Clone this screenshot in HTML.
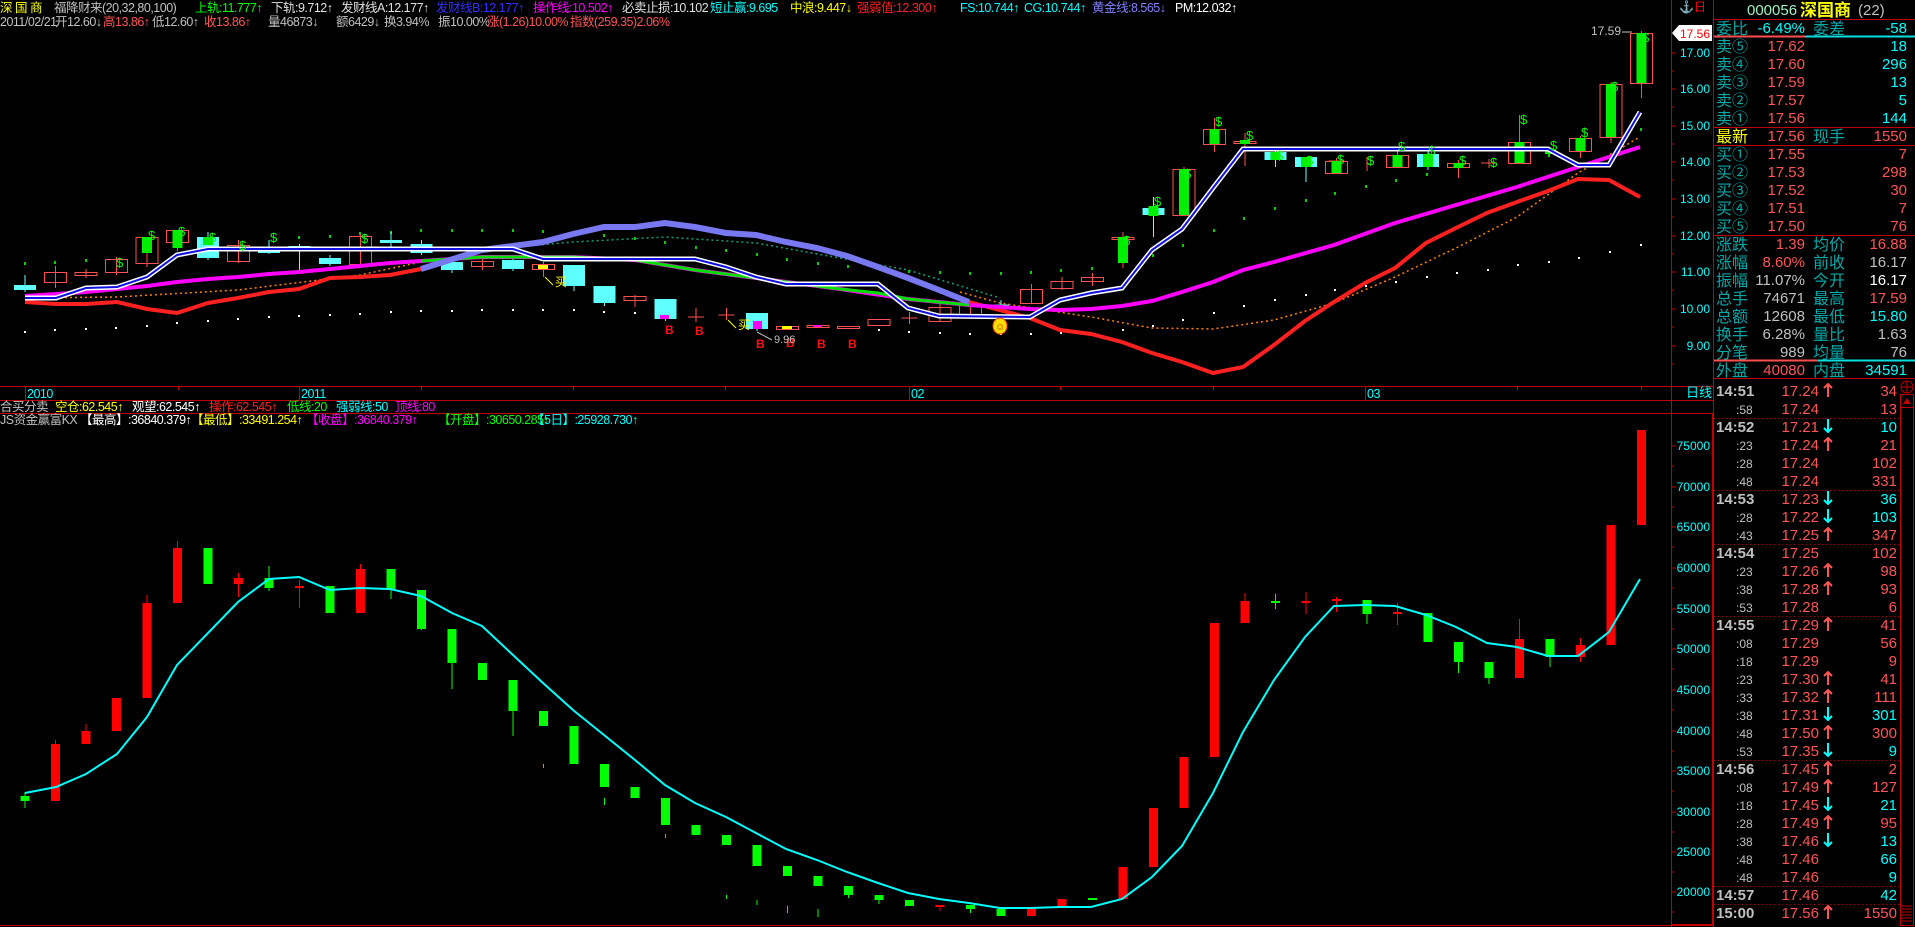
<!DOCTYPE html>
<html><head><meta charset="utf-8"><style>
html,body{margin:0;padding:0;background:#000;width:1915px;height:927px;overflow:hidden}
svg{display:block}
text{font-family:"Liberation Sans","Noto Sans CJK SC",sans-serif}
.s{font-size:12.5px;letter-spacing:-0.5px}
.r{font-size:15px}
.lb{font-size:16px;fill:#00a8a8}
</style></head><body>
<svg width="1915" height="927" viewBox="0 0 1915 927" xmlns="http://www.w3.org/2000/svg">
<g stroke="#c00000" stroke-width="1" fill="none">
<line x1="0" y1="386.5" x2="1713" y2="386.5"/>
<line x1="0" y1="400.5" x2="1713" y2="400.5"/>
<line x1="0" y1="413.5" x2="1671" y2="413.5"/>
<line x1="0" y1="925.5" x2="1713" y2="925.5"/>
<line x1="1671.5" y1="0" x2="1671.5" y2="927"/>
<line x1="1713.5" y1="0" x2="1713.5" y2="927"/>
<rect x="1671.5" y="413.5" width="41" height="511"/>
<line x1="25.5" y1="386" x2="25.5" y2="400"/>
<line x1="299.5" y1="386" x2="299.5" y2="400"/>
<line x1="909.5" y1="386" x2="909.5" y2="400"/>
<line x1="1365.5" y1="386" x2="1365.5" y2="400"/>
<line x1="178.5" y1="386" x2="178.5" y2="390"/><line x1="421.5" y1="386" x2="421.5" y2="390"/><line x1="573.5" y1="386" x2="573.5" y2="390"/><line x1="725.5" y1="386" x2="725.5" y2="390"/><line x1="1060.5" y1="386" x2="1060.5" y2="390"/><line x1="1213.5" y1="386" x2="1213.5" y2="390"/><line x1="1517.5" y1="386" x2="1517.5" y2="390"/><line x1="1641.5" y1="386" x2="1641.5" y2="390"/>
</g>
<g class="s">
<text x="0" y="12" fill="#ffff00">深 国 商</text>
<text x="54" y="12" fill="#c0c0c0">福降财来(20,32,80,100)</text>
<text x="195" y="12" fill="#00ff00">上轨:11.777↑</text>
<text x="271" y="12" fill="#e0e0e0">下轨:9.712↑</text>
<text x="341" y="12" fill="#e0e0e0">发财线A:12.177↑</text>
<text x="436" y="12" fill="#3030ff">发财线B:12.177↑</text>
<text x="533" y="12" fill="#ff00ff">操作线:10.502↑</text>
<text x="622" y="12" fill="#e0e0e0">必卖止损:10.102</text>
<text x="710" y="12" fill="#00ffff">短止赢:9.695</text>
<text x="790" y="12" fill="#ffff00">中浪:9.447↓</text>
<text x="857" y="12" fill="#ff2020">强弱值:12.300↑</text>
<text x="960" y="12" fill="#00ffff">FS:10.744↑</text>
<text x="1024" y="12" fill="#00ffff">CG:10.744↑</text>
<text x="1092" y="12" fill="#8080ff">黄金线:8.565↓</text>
<text x="1175" y="12" fill="#ffffff">PM:12.032↑</text>
<text x="0" y="26" fill="#c0c0c0">2011/02/21</text>
<text x="55" y="26" fill="#c0c0c0">开12.60↓</text>
<text x="103" y="26" fill="#ff5555">高13.86↑</text>
<text x="152" y="26" fill="#c0c0c0">低12.60↑</text>
<text x="204" y="26" fill="#ff5555">收13.86↑</text>
<text x="268" y="26" fill="#c0c0c0">量46873↓</text>
<text x="336" y="26" fill="#c0c0c0">额6429↓</text>
<text x="384" y="26" fill="#c0c0c0">换3.94%</text>
<text x="438" y="26" fill="#c0c0c0">振10.00%</text>
<text x="487" y="26" fill="#ff5555">涨(1.26)10.00%</text>
<text x="570" y="26" fill="#ff5555">指数(259.35)2.06%</text>
<text x="27" y="398" fill="#00ffff">2010</text>
<text x="301" y="398" fill="#00ffff">2011</text>
<text x="911" y="398" fill="#00ffff">02</text>
<text x="1367" y="398" fill="#00ffff">03</text>
<text x="0" y="411" fill="#c0c0c0">合买分卖</text>
<text x="55" y="411" fill="#ffff00">空仓:62.545↑</text>
<text x="132" y="411" fill="#ffffff">观望:62.545↑</text>
<text x="209" y="411" fill="#ff2020">操作:62.545↑</text>
<text x="287" y="411" fill="#00ff00">低线:20</text>
<text x="336" y="411" fill="#00ffff">强弱线:50</text>
<text x="395" y="411" fill="#ff00ff">顶线:80</text>
<text x="0" y="424" fill="#c0c0c0">JS资金赢富KX</text>
<text x="80" y="424" fill="#ffffff">【最高】:36840.379↑</text>
<text x="191" y="424" fill="#ffff00">【最低】:33491.254↑</text>
<text x="306" y="424" fill="#ff00ff">【收盘】:36840.379↑</text>
<text x="438" y="424" fill="#00ff00">【开盘】:30650.285↑</text>
<text x="532" y="424" fill="#00ffff">【5日】:25928.730↑</text>
</g>
<g font-size="12" fill="#00ffff" text-anchor="end">
<text x="1710" y="57">17.00</text><text x="1710" y="93">16.00</text><text x="1710" y="130">15.00</text><text x="1710" y="166">14.00</text><text x="1710" y="203">13.00</text><text x="1710" y="240">12.00</text><text x="1710" y="276">11.00</text><text x="1710" y="313">10.00</text><text x="1710" y="350">9.00</text>
<text x="1710" y="450">75000</text><text x="1710" y="491">70000</text><text x="1710" y="531">65000</text><text x="1710" y="572">60000</text><text x="1710" y="613">55000</text><text x="1710" y="653">50000</text><text x="1710" y="694">45000</text><text x="1710" y="735">40000</text><text x="1710" y="775">35000</text><text x="1710" y="816">30000</text><text x="1710" y="856">25000</text><text x="1710" y="896">20000</text>
</g>
<g stroke="#c00000">
<path d="M1671 53h5M1671 89h5M1671 126h5M1671 162h5M1671 199h5M1671 236h5M1671 272h5M1671 309h5M1671 346h5M1671 71h3M1671 107h3M1671 144h3M1671 180h3M1671 217h3M1671 254h3M1671 290h3M1671 327h3M1671 364h3"/>
<path d="M1671 446h5M1671 487h5M1671 527h5M1671 568h5M1671 609h5M1671 649h5M1671 690h5M1671 731h5M1671 771h5M1671 812h5M1671 852h5M1671 892h5M1671 466h3M1671 507h3M1671 547h3M1671 588h3M1671 629h3M1671 669h3M1671 710h3M1671 751h3M1671 791h3M1671 832h3M1671 872h3M1671 912h3"/>
</g>
<path d="M1672 33 L1679 25 H1712 V41 H1679 Z" fill="#ffffff"/>
<text x="1710" y="38" font-size="12" fill="#ff0000" text-anchor="end">17.56</text>
<text x="1679" y="11" font-size="12" fill="#ff0000">⚓日</text>
<text x="1686" y="397" font-size="13" fill="#00ffff">日线</text>
<text x="1591" y="35" font-size="12" fill="#c0c0c0">17.59</text>
<line x1="1622" y1="32" x2="1632" y2="32" stroke="#c0c0c0"/>

<g fill="#ffffff">
<rect x="24" y="331" width="2" height="2"/><rect x="54" y="329" width="2" height="2"/><rect x="85" y="328" width="2" height="2"/><rect x="115" y="327" width="2" height="2"/><rect x="146" y="325" width="2" height="2"/><rect x="176" y="322" width="2" height="2"/><rect x="207" y="320" width="2" height="2"/><rect x="237" y="318" width="2" height="2"/><rect x="268" y="316" width="2" height="2"/><rect x="298" y="315" width="2" height="2"/><rect x="329" y="314" width="2" height="2"/><rect x="359" y="313" width="2" height="2"/><rect x="390" y="311" width="2" height="2"/><rect x="420" y="310" width="2" height="2"/><rect x="451" y="310" width="2" height="2"/><rect x="481" y="309" width="2" height="2"/><rect x="512" y="309" width="2" height="2"/><rect x="542" y="309" width="2" height="2"/><rect x="573" y="309" width="2" height="2"/><rect x="603" y="311" width="2" height="2"/><rect x="634" y="312" width="2" height="2"/>
<rect x="878" y="329" width="2" height="2"/><rect x="908" y="331" width="2" height="2"/><rect x="939" y="332" width="2" height="2"/><rect x="969" y="333" width="2" height="2"/><rect x="1000" y="333" width="2" height="2"/><rect x="1030" y="333" width="2" height="2"/><rect x="1060" y="332" width="2" height="2"/><rect x="1122" y="329" width="2" height="2"/><rect x="1152" y="325" width="2" height="2"/><rect x="1182" y="319" width="2" height="2"/><rect x="1213" y="312" width="2" height="2"/><rect x="1243" y="305" width="2" height="2"/><rect x="1274" y="299" width="2" height="2"/><rect x="1305" y="294" width="2" height="2"/><rect x="1334" y="289" width="2" height="2"/><rect x="1365" y="285" width="2" height="2"/><rect x="1395" y="281" width="2" height="2"/><rect x="1426" y="276" width="2" height="2"/><rect x="1456" y="272" width="2" height="2"/><rect x="1487" y="269" width="2" height="2"/><rect x="1517" y="264" width="2" height="2"/><rect x="1548" y="261" width="2" height="2"/><rect x="1578" y="257" width="2" height="2"/><rect x="1609" y="251" width="2" height="2"/><rect x="1640" y="244" width="2" height="2"/>
</g>
<g fill="#00d000">
<rect x="24" y="262" width="2" height="3"/><rect x="54" y="261" width="2" height="3"/><rect x="85" y="259" width="2" height="3"/><rect x="298" y="236" width="2" height="3"/><rect x="329" y="235" width="2" height="3"/><rect x="359" y="232" width="2" height="3"/><rect x="390" y="231" width="2" height="3"/><rect x="420" y="229" width="2" height="3"/><rect x="451" y="229" width="2" height="3"/><rect x="481" y="229" width="2" height="3"/><rect x="512" y="229" width="2" height="3"/><rect x="542" y="230" width="2" height="3"/><rect x="573" y="231" width="2" height="3"/><rect x="603" y="234" width="2" height="3"/><rect x="634" y="237" width="2" height="3"/><rect x="664" y="241" width="2" height="3"/><rect x="695" y="246" width="2" height="3"/><rect x="725" y="249" width="2" height="3"/><rect x="756" y="253" width="2" height="3"/><rect x="786" y="258" width="2" height="3"/><rect x="817" y="262" width="2" height="3"/><rect x="847" y="265" width="2" height="3"/><rect x="908" y="270" width="2" height="3"/><rect x="939" y="271" width="2" height="3"/><rect x="969" y="272" width="2" height="3"/><rect x="1000" y="272" width="2" height="3"/><rect x="1030" y="271" width="2" height="3"/><rect x="1060" y="269" width="2" height="3"/><rect x="1091" y="267" width="2" height="3"/><rect x="1152" y="254" width="2" height="3"/><rect x="1182" y="244" width="2" height="3"/><rect x="1213" y="229" width="2" height="3"/><rect x="1243" y="217" width="2" height="3"/><rect x="1274" y="207" width="2" height="3"/><rect x="1305" y="199" width="2" height="3"/><rect x="1334" y="192" width="2" height="3"/><rect x="1365" y="185" width="2" height="3"/><rect x="1395" y="179" width="2" height="3"/><rect x="1426" y="173" width="2" height="3"/><rect x="1548" y="154" width="2" height="3"/><rect x="1640" y="128" width="2" height="3"/>
</g>
<polyline fill="none" stroke="#ff8000" stroke-width="1.5" stroke-dasharray="2,3" points="25,298 117,297 238,290 360,275 421,262"/>
<polyline fill="none" stroke="#ff8000" stroke-width="1.5" stroke-dasharray="2,3" points="960,292 1000,303 1091,317 1152,328 1213,329 1274,320 1334,303 1395,277 1456,248 1517,217 1578,173 1640,137"/>
<polyline fill="none" stroke="#10a080" stroke-width="1.5" stroke-dasharray="2,3" points="482,250 573,242 665,237 756,243 840,258 908,270 1000,298"/>
<g stroke="#ff5050" fill="none" stroke-width="1">
<path d="M55.5 266V288M86 269V278M116.5 257V275M147 237V267M177.5 230V251M238.5 240V263M360.5 234V265M482.5 258V270M543.5 262V277M635 295V307M696 308V322M726.5 308V320M909.5 312V324M940 300V322M970.5 302V316M1031.5 284V304M1062 277V290M1092.5 273V286M1123 232V268M1184 167V216M1214.5 118V152M1245 133V166M1336.5 158V174M1367 157V171M1397.5 150V168M1458.5 160V178M1489 159V168M1519.5 115V164M1580.5 136V158M1611 82V143M1641.5 31V98"/>
<rect x="44.5" y="272.5" width="22" height="10"/><rect x="75" y="272.5" width="22" height="3"/><rect x="105.5" y="259.5" width="22" height="13"/><rect x="136" y="237.5" width="22" height="26"/><rect x="166.5" y="230.5" width="22" height="12"/><rect x="227.5" y="245.5" width="22" height="16"/><rect x="349.5" y="236.5" width="22" height="28"/><rect x="471.5" y="261.5" width="22" height="5"/><rect x="532.5" y="264.5" width="22" height="5"/><rect x="624" y="296.5" width="22" height="4"/><rect x="776.5" y="326.5" width="22" height="3"/><rect x="807" y="325.5" width="22" height="2"/><rect x="837.5" y="326.5" width="22" height="2"/><rect x="868" y="319.5" width="22" height="6"/><rect x="929" y="307.5" width="22" height="14"/><rect x="959.5" y="305.5" width="22" height="10"/><rect x="1020.5" y="289.5" width="22" height="14"/><rect x="1051" y="281.5" width="22" height="7"/><rect x="1081.5" y="277.5" width="22" height="4"/><rect x="1112" y="237.5" width="22" height="2"/><rect x="1173" y="169.5" width="22" height="46"/><rect x="1203.5" y="129.5" width="22" height="15"/><rect x="1234" y="141.5" width="22" height="2"/><rect x="1325.5" y="161.5" width="22" height="12"/><rect x="1386.5" y="155.5" width="22" height="12"/><rect x="1447.5" y="163.5" width="22" height="4"/><rect x="1508.5" y="142.5" width="22" height="21"/><rect x="1569.5" y="138.5" width="22" height="13"/><rect x="1600" y="84.5" width="22" height="53"/><rect x="1630.5" y="33.5" width="22" height="50"/>
<path d="M688 317H704M718.5 315H734.5M901.5 318H917.5M1328.5 161H1344.5M1481 163H1497"/>
</g>
<g stroke="#60ffff" fill="#60ffff">
<path d="M25 275V292M208 232V260M269 240V254M299.5 244V271M330 255V266M391 232V247M421.5 240V255M452 258V273M513 256V271M574 265V291M604.5 286V306M665.5 299V321M757 313V331M1001 300V310M1153.5 197V237M1275.5 150V167M1306 157V182M1428 150V170" fill="none"/>
<rect x="14" y="285" width="22" height="5" stroke="none"/><rect x="197" y="237" width="22" height="21" stroke="none"/><rect x="258" y="250" width="22" height="3" stroke="none"/><rect x="288.5" y="246" width="22" height="2" stroke="none"/><rect x="319" y="258" width="22" height="6" stroke="none"/><rect x="380" y="240" width="22" height="3" stroke="none"/><rect x="410.5" y="244" width="22" height="9" stroke="none"/><rect x="441" y="262" width="22" height="8" stroke="none"/><rect x="502" y="260" width="22" height="9" stroke="none"/><rect x="563" y="265" width="22" height="21" stroke="none"/><rect x="593.5" y="286" width="22" height="17" stroke="none"/><rect x="654.5" y="299" width="22" height="20" stroke="none"/><rect x="746" y="313" width="22" height="16" stroke="none"/><rect x="1142.5" y="208" width="22" height="7" stroke="none"/><rect x="1264.5" y="152" width="22" height="8" stroke="none"/><rect x="1295" y="157" width="22" height="10" stroke="none"/><rect x="1417" y="154" width="22" height="13" stroke="none"/>
<path d="M993 305H1009" fill="none"/>
</g>
<g fill="#00ee00">
<rect x="142" y="237" width="10" height="16"/><rect x="172.5" y="230" width="10" height="18"/><rect x="203" y="237" width="10" height="8"/><rect x="1118" y="237" width="10" height="26"/><rect x="1148.5" y="206" width="10" height="10"/><rect x="1179" y="169" width="10" height="46"/><rect x="1209.5" y="129" width="10" height="15"/><rect x="1240" y="140" width="10" height="4"/><rect x="1270.5" y="152" width="10" height="8"/><rect x="1301" y="157" width="10" height="10"/><rect x="1331.5" y="161" width="10" height="12"/><rect x="1392.5" y="155" width="10" height="12"/><rect x="1423" y="154" width="10" height="13"/><rect x="1453.5" y="163" width="10" height="5"/><rect x="1514.5" y="142" width="10" height="21"/><rect x="1545" y="150" width="10" height="4"/><rect x="1575.5" y="138" width="10" height="13"/><rect x="1606" y="84" width="10" height="53"/><rect x="1636.5" y="33" width="10" height="50"/>
</g>
<rect x="538" y="265" width="10" height="4" fill="#ffff00"/><rect x="782" y="326" width="10" height="3" fill="#ffff00"/><rect x="753" y="321" width="9" height="8" fill="#ff00ff"/><rect x="660" y="315" width="9" height="4" fill="#ff00ff"/><rect x="813" y="325" width="9" height="2" fill="#ff00ff"/>
<polyline fill="none" stroke="#ff2020" stroke-width="4" points="25,302 56,304 86,304 117,302 147,309 177,313 208,303 238,298 269,292 299,289 330,278 360,277 390,275 421,269 482,250 543,242 573,234 604,227 635,227 665,223 695,227 726,233 756,235 786,242 817,248 847,256 878,267 908,278 939,290 969,302 1030,318 1060,330 1091,334 1122,342 1152,353 1182,362 1213,373 1243,367 1274,345 1305,321 1334,302 1365,283 1395,268 1426,243 1456,228 1487,213 1517,202 1548,191 1578,179 1609,180 1640,197"/>
<polyline fill="none" stroke="#ff00ff" stroke-width="4" points="25,296 56,294 86,292 117,289 147,286 177,282 208,279 238,277 269,274 299,272 330,269 360,266 390,263 421,261 482,257 573,257 635,260 695,270 756,278 840,289 908,299 969,305 1000,307 1030,309 1060,310 1091,309 1122,306 1152,301 1182,292 1213,282 1243,270 1274,262 1334,245 1395,223 1456,205 1517,187 1578,167 1640,147"/>
<polyline fill="none" stroke="#00e000" stroke-width="3" points="421,261 482,257 573,257 635,260 695,270 756,278 840,289 878,293 908,299 969,305"/>
<polyline fill="none" stroke="#7878f0" stroke-width="6" points="421,269 482,250 543,242 573,234 604,227 635,227 665,223 695,227 726,233 756,235 786,242 817,248 847,256 878,267 908,278 939,290 969,302"/>
<polyline fill="none" stroke="#ffffff" stroke-width="5" points="25,298 56,298 86,288 117,287 147,277 177,255 208,249 482,249 513,249 543,259 695,259 726,267 756,277 786,284 878,284 908,308 939,316 1030,317 1060,300 1091,293 1122,288 1152,250 1182,229 1213,188 1243,149 1548,149 1578,165 1609,165 1640,112"/>
<polyline fill="none" stroke="#1010e0" stroke-width="2" points="25,298 56,298 86,288 117,287 147,277 177,255 208,249 482,249 513,249 543,259 695,259 726,267 756,277 786,284 878,284 908,308 939,316 1030,317 1060,300 1091,293 1122,288 1152,250 1182,229 1213,188 1243,149 1548,149 1578,165 1609,165 1640,112"/>
<g fill="#00ff00" font-size="13" font-family="Liberation Sans,sans-serif">
<text x="116" y="267">$</text><text x="148" y="240">$</text><text x="178" y="236">$</text><text x="209" y="242">$</text><text x="239" y="250">$</text><text x="270" y="242">$</text><text x="361" y="243">$</text>
<text x="1123" y="245">$</text><text x="1154" y="206">$</text><text x="1184" y="178">$</text><text x="1215" y="126">$</text><text x="1246" y="140">$</text><text x="1276" y="160">$</text><text x="1306" y="165">$</text><text x="1337" y="164">$</text><text x="1367" y="165">$</text><text x="1398" y="151">$</text><text x="1428" y="155">$</text><text x="1459" y="165">$</text><text x="1490" y="167">$</text><text x="1520" y="124">$</text><text x="1550" y="150">$</text><text x="1581" y="137">$</text><text x="1611" y="91">$</text><text x="1642" y="42">$</text>
</g>
<g fill="#ff1010" font-size="12" font-weight="bold">
<text x="665" y="334">B</text><text x="695" y="335">B</text><text x="756" y="348">B</text><text x="786" y="347">B</text><text x="817" y="348">B</text><text x="848" y="348">B</text>
</g>
<g fill="#ffff00" font-size="12"><text x="555" y="286">买</text><text x="738" y="329">买</text></g>
<path d="M545 277l8 8M728 320l8 8" stroke="#ffff00"/>
<text x="774" y="343" font-size="11" fill="#c0c0c0">9.96</text>
<path d="M757 332l15 8" stroke="#c0c0c0"/>
<ellipse cx="1000" cy="326" rx="7" ry="8" fill="#ffdd00" stroke="#ff4000"/>
<text x="995" y="330" font-size="10" fill="#a04000">☺</text>

<g stroke="#ff0000" fill="#ff0000">
<path d="M55.5 740V801M86 724V744M147 595V603M177.5 541V548M238.5 573V597M299.5 580V608M360.5 564V613M940 906V911M1245 593V623M1306 592V614M1336.5 597V612M1397.5 603V625M1519.5 619V678M1580.5 638V662" fill="none"/>
<rect x="51" y="744" width="9" height="57" stroke="none"/><rect x="81.5" y="731" width="9" height="13" stroke="none"/><rect x="112" y="698" width="9" height="33" stroke="none"/><rect x="142.5" y="603" width="9" height="95" stroke="none"/><rect x="173" y="548" width="9" height="55" stroke="none"/><rect x="234" y="578" width="9" height="6" stroke="none"/><rect x="295" y="586" width="9" height="2" stroke="none"/><rect x="356" y="569" width="9" height="44" stroke="none"/><rect x="935.5" y="905" width="9" height="2" stroke="none"/><rect x="1027" y="907" width="9" height="9" stroke="none"/><rect x="1057.5" y="899" width="9" height="8" stroke="none"/><rect x="1118.5" y="867" width="9" height="32" stroke="none"/><rect x="1149" y="808" width="9" height="59" stroke="none"/><rect x="1179.5" y="757" width="9" height="51" stroke="none"/><rect x="1210" y="623" width="9" height="134" stroke="none"/><rect x="1240.5" y="601" width="9" height="22" stroke="none"/><rect x="1301.5" y="601" width="9" height="2" stroke="none"/><rect x="1332" y="599" width="9" height="2" stroke="none"/><rect x="1393" y="612" width="9" height="2" stroke="none"/><rect x="1515" y="639" width="9" height="39" stroke="none"/><rect x="1576" y="645" width="9" height="12" stroke="none"/><rect x="1606.5" y="525" width="9" height="120" stroke="none"/><rect x="1637" y="430" width="9" height="95" stroke="none"/>
</g>
<g stroke="#00ff00" fill="#00ff00">
<path d="M25 792V808M269 566V591M391 570V599M421.5 629V630M452 663V689M513 711V736M543.5 764V768M604.5 798V805M665.5 834V838M726.5 895V899M757 900V905M787.5 906V913M818 909V917M848.5 886V898M879 895V904M970.5 905V913M1275.5 594V609M1367 613V624M1458.5 662V673M1489 678V684M1550 657V667" fill="none"/>
<rect x="20.5" y="796" width="9" height="5" stroke="none"/><rect x="203.5" y="548" width="9" height="36" stroke="none"/><rect x="264.5" y="578" width="9" height="10" stroke="none"/><rect x="325.5" y="586" width="9" height="27" stroke="none"/><rect x="386.5" y="569" width="9" height="21" stroke="none"/><rect x="417" y="590" width="9" height="39" stroke="none"/><rect x="447.5" y="629" width="9" height="34" stroke="none"/><rect x="478" y="663" width="9" height="17" stroke="none"/><rect x="508.5" y="680" width="9" height="31" stroke="none"/><rect x="539" y="711" width="9" height="15" stroke="none"/><rect x="569.5" y="726" width="9" height="38" stroke="none"/><rect x="600" y="764" width="9" height="23" stroke="none"/><rect x="630.5" y="787" width="9" height="11" stroke="none"/><rect x="661" y="798" width="9" height="27" stroke="none"/><rect x="691.5" y="825" width="9" height="10" stroke="none"/><rect x="722" y="835" width="9" height="10" stroke="none"/><rect x="752.5" y="845" width="9" height="21" stroke="none"/><rect x="783" y="866" width="9" height="10" stroke="none"/><rect x="813.5" y="876" width="9" height="10" stroke="none"/><rect x="844" y="886" width="9" height="9" stroke="none"/><rect x="874.5" y="895" width="9" height="5" stroke="none"/><rect x="905" y="900" width="9" height="6" stroke="none"/><rect x="966" y="905" width="9" height="4" stroke="none"/><rect x="996.5" y="909" width="9" height="7" stroke="none"/><rect x="1088" y="898" width="9" height="2" stroke="none"/><rect x="1271" y="601" width="9" height="2" stroke="none"/><rect x="1362.5" y="600" width="9" height="14" stroke="none"/><rect x="1423.5" y="613" width="9" height="29" stroke="none"/><rect x="1454" y="642" width="9" height="20" stroke="none"/><rect x="1484.5" y="662" width="9" height="16" stroke="none"/><rect x="1545.5" y="639" width="9" height="18" stroke="none"/>
</g>
<polyline fill="none" stroke="#00ffff" stroke-width="2" points="25,793 56,787 86,774 117,754 147,717 177,665 208,633 238,602 269,579 299,577 330,590 360,588 390,589 421,596 452,613 482,626 513,655 543,683 573,710 604,735 635,760 665,785 695,803 726,817 756,833 786,849 817,860 847,872 878,883 908,893 939,899 969,903 1000,908 1030,908 1060,907 1091,907 1122,899 1152,877 1182,846 1213,793 1243,732 1274,680 1305,637 1334,606 1365,605 1395,606 1426,615 1456,627 1487,643 1517,647 1548,656 1578,656 1609,632 1640,579"/>

<g>
<text x="1747" y="15" font-size="15" fill="#a0f0c0">000056</text>
<text x="1800" y="16" font-size="17" fill="#ffff00" font-weight="bold">深国商</text>
<text x="1858" y="15" font-size="15" fill="#c0c0c0">(22)</text>
<line x1="1713" y1="19.5" x2="1915" y2="19.5" stroke="#c00000"/>
<line x1="1714" y1="36.5" x2="1805" y2="36.5" stroke="#ff5050" stroke-width="2"/>
<line x1="1805" y1="36.5" x2="1915" y2="36.5" stroke="#00e0e0" stroke-width="2"/>
<line x1="1713" y1="127.5" x2="1915" y2="127.5" stroke="#c00000"/>
<line x1="1713" y1="145.5" x2="1915" y2="145.5" stroke="#c00000"/>
<line x1="1713" y1="235.5" x2="1915" y2="235.5" stroke="#c00000"/>
<line x1="1714" y1="360.5" x2="1818" y2="360.5" stroke="#ff5050" stroke-width="2"/>
<line x1="1818" y1="360.5" x2="1915" y2="360.5" stroke="#00e0e0" stroke-width="2"/>
<line x1="1713" y1="378.5" x2="1915" y2="378.5" stroke="#c00000"/>
</g>
<g class="lb">
<text x="1716" y="34">委比</text><text x="1813" y="34">委差</text>
<text x="1716" y="52">卖⑤</text><text x="1716" y="70">卖④</text><text x="1716" y="88">卖③</text><text x="1716" y="106">卖②</text><text x="1716" y="124">卖①</text>
<text x="1716" y="142" fill="#ffff00">最新</text><text x="1813" y="142">现手</text>
<text x="1716" y="160">买①</text><text x="1716" y="178">买②</text><text x="1716" y="196">买③</text><text x="1716" y="214">买④</text><text x="1716" y="232">买⑤</text>
<text x="1716" y="250">涨跌</text><text x="1813" y="250">均价</text>
<text x="1716" y="268">涨幅</text><text x="1813" y="268">前收</text>
<text x="1716" y="286">振幅</text><text x="1813" y="286">今开</text>
<text x="1716" y="304">总手</text><text x="1813" y="304">最高</text>
<text x="1716" y="322">总额</text><text x="1813" y="322">最低</text>
<text x="1716" y="340">换手</text><text x="1813" y="340">量比</text>
<text x="1716" y="358">分笔</text><text x="1813" y="358">均量</text>
<text x="1716" y="376">外盘</text><text x="1813" y="376">内盘</text>
</g>
<g class="r" text-anchor="end">
<text x="1805" y="33" fill="#00ffff">-6.49%</text><text x="1907" y="33" fill="#00ffff">-58</text>
<text x="1805" y="51" fill="#ff5555">17.62</text><text x="1907" y="51" fill="#00ffff">18</text>
<text x="1805" y="69" fill="#ff5555">17.60</text><text x="1907" y="69" fill="#00ffff">296</text>
<text x="1805" y="87" fill="#ff5555">17.59</text><text x="1907" y="87" fill="#00ffff">13</text>
<text x="1805" y="105" fill="#ff5555">17.57</text><text x="1907" y="105" fill="#00ffff">5</text>
<text x="1805" y="123" fill="#ff5555">17.56</text><text x="1907" y="123" fill="#00ffff">144</text>
<text x="1805" y="141" fill="#ff5555">17.56</text><text x="1907" y="141" fill="#ff5555">1550</text>
<text x="1805" y="159" fill="#ff5555">17.55</text><text x="1907" y="159" fill="#ff5555">7</text>
<text x="1805" y="177" fill="#ff5555">17.53</text><text x="1907" y="177" fill="#ff5555">298</text>
<text x="1805" y="195" fill="#ff5555">17.52</text><text x="1907" y="195" fill="#ff5555">30</text>
<text x="1805" y="213" fill="#ff5555">17.51</text><text x="1907" y="213" fill="#ff5555">7</text>
<text x="1805" y="231" fill="#ff5555">17.50</text><text x="1907" y="231" fill="#ff5555">76</text>
<text x="1805" y="249" fill="#ff5555">1.39</text><text x="1907" y="249" fill="#ff5555">16.88</text>
<text x="1805" y="267" fill="#ff5555">8.60%</text><text x="1907" y="267" fill="#c0c0c0">16.17</text>
<text x="1805" y="285" fill="#c0c0c0">11.07%</text><text x="1907" y="285" fill="#ffffff">16.17</text>
<text x="1805" y="303" fill="#c0c0c0">74671</text><text x="1907" y="303" fill="#ff5555">17.59</text>
<text x="1805" y="321" fill="#c0c0c0">12608</text><text x="1907" y="321" fill="#00ffff">15.80</text>
<text x="1805" y="339" fill="#c0c0c0">6.28%</text><text x="1907" y="339" fill="#c0c0c0">1.63</text>
<text x="1805" y="357" fill="#c0c0c0">989</text><text x="1907" y="357" fill="#c0c0c0">76</text>
<text x="1805" y="375" fill="#ff5555">40080</text><text x="1907" y="375" fill="#00ffff">34591</text>
</g>
<g class="r">
<g fill="#c0c0c0" font-weight="bold">
<text x="1716" y="396">14:51</text><text x="1716" y="432">14:52</text><text x="1716" y="504">14:53</text><text x="1716" y="558">14:54</text><text x="1716" y="630">14:55</text><text x="1716" y="774">14:56</text><text x="1716" y="900">14:57</text><text x="1716" y="918">15:00</text>
</g>
<g fill="#c0c0c0" font-size="12">
<text x="1736" y="414">:58</text><text x="1736" y="450">:23</text><text x="1736" y="468">:28</text><text x="1736" y="486">:48</text><text x="1736" y="522">:28</text><text x="1736" y="540">:43</text><text x="1736" y="576">:23</text><text x="1736" y="594">:38</text><text x="1736" y="612">:53</text><text x="1736" y="648">:08</text><text x="1736" y="666">:18</text><text x="1736" y="684">:23</text><text x="1736" y="702">:33</text><text x="1736" y="720">:38</text><text x="1736" y="738">:48</text><text x="1736" y="756">:53</text><text x="1736" y="792">:08</text><text x="1736" y="810">:18</text><text x="1736" y="828">:28</text><text x="1736" y="846">:38</text><text x="1736" y="864">:48</text><text x="1736" y="882">:48</text>
</g>
<g fill="#ff5555" text-anchor="end">
<text x="1819" y="396">17.24</text><text x="1819" y="414">17.24</text><text x="1819" y="432">17.21</text><text x="1819" y="450">17.24</text><text x="1819" y="468">17.24</text><text x="1819" y="486">17.24</text><text x="1819" y="504">17.23</text><text x="1819" y="522">17.22</text><text x="1819" y="540">17.25</text><text x="1819" y="558">17.25</text><text x="1819" y="576">17.26</text><text x="1819" y="594">17.28</text><text x="1819" y="612">17.28</text><text x="1819" y="630">17.29</text><text x="1819" y="648">17.29</text><text x="1819" y="666">17.29</text><text x="1819" y="684">17.30</text><text x="1819" y="702">17.32</text><text x="1819" y="720">17.31</text><text x="1819" y="738">17.50</text><text x="1819" y="756">17.35</text><text x="1819" y="774">17.45</text><text x="1819" y="792">17.49</text><text x="1819" y="810">17.45</text><text x="1819" y="828">17.49</text><text x="1819" y="846">17.46</text><text x="1819" y="864">17.46</text><text x="1819" y="882">17.46</text><text x="1819" y="900">17.46</text><text x="1819" y="918">17.56</text>
</g>
<g text-anchor="end">
<text x="1897" y="396" fill="#ff5555">34</text><text x="1897" y="414" fill="#ff5555">13</text><text x="1897" y="432" fill="#00ffff">10</text><text x="1897" y="450" fill="#ff5555">21</text><text x="1897" y="468" fill="#ff5555">102</text><text x="1897" y="486" fill="#ff5555">331</text><text x="1897" y="504" fill="#00ffff">36</text><text x="1897" y="522" fill="#00ffff">103</text><text x="1897" y="540" fill="#ff5555">347</text><text x="1897" y="558" fill="#ff5555">102</text><text x="1897" y="576" fill="#ff5555">98</text><text x="1897" y="594" fill="#ff5555">93</text><text x="1897" y="612" fill="#ff5555">6</text><text x="1897" y="630" fill="#ff5555">41</text><text x="1897" y="648" fill="#ff5555">56</text><text x="1897" y="666" fill="#ff5555">9</text><text x="1897" y="684" fill="#ff5555">41</text><text x="1897" y="702" fill="#ff5555">111</text><text x="1897" y="720" fill="#00ffff">301</text><text x="1897" y="738" fill="#ff5555">300</text><text x="1897" y="756" fill="#00ffff">9</text><text x="1897" y="774" fill="#ff5555">2</text><text x="1897" y="792" fill="#ff5555">127</text><text x="1897" y="810" fill="#00ffff">21</text><text x="1897" y="828" fill="#ff5555">95</text><text x="1897" y="846" fill="#00ffff">13</text><text x="1897" y="864" fill="#00ffff">66</text><text x="1897" y="882" fill="#00ffff">9</text><text x="1897" y="900" fill="#00ffff">42</text><text x="1897" y="918" fill="#ff5555">1550</text>
</g>
</g>
<g stroke="#ff5555" stroke-width="2" fill="none">
<path d="M1828 397V384M1824 388l4-4 4 4M1828 451V438M1824 442l4-4 4 4M1828 541V528M1824 532l4-4 4 4M1828 577V564M1824 568l4-4 4 4M1828 595V582M1824 586l4-4 4 4M1828 631V618M1824 622l4-4 4 4M1828 685V672M1824 676l4-4 4 4M1828 703V690M1824 694l4-4 4 4M1828 739V726M1824 730l4-4 4 4M1828 775V762M1824 766l4-4 4 4M1828 793V780M1824 784l4-4 4 4M1828 829V816M1824 820l4-4 4 4M1828 919V906M1824 910l4-4 4 4"/>
</g>
<g stroke="#00ffff" stroke-width="2" fill="none">
<path d="M1828 419V432M1824 428l4 4 4-4M1828 491V504M1824 500l4 4 4-4M1828 509V522M1824 518l4 4 4-4M1828 707V720M1824 716l4 4 4-4M1828 743V756M1824 752l4 4 4-4M1828 797V810M1824 806l4 4 4-4M1828 833V846M1824 842l4 4 4-4"/>
</g>
<g stroke="#a00000" stroke-dasharray="1,3">
<path d="M1714 418.5H1900M1714 490.5H1900M1714 544.5H1900M1714 616.5H1900M1714 760.5H1900M1714 886.5H1900M1714 904.5H1900"/>
</g>
<rect x="1900.5" y="394.5" width="13" height="531" fill="none" stroke="#c00000"/>
<rect x="1900.5" y="394.5" width="13" height="13" fill="none" stroke="#c00000"/>
<path d="M1903 404l4-6 4 6z" fill="#c00000"/>
<circle cx="1907" cy="387" r="6" fill="none" stroke="#c00000"/>
<path d="M1901 387h12M1907 381v12" stroke="#c00000"/>
<path d="M1902 906h10M1902 909h10M1902 912h10M1902 915h10M1902 918h10M1902 921h10" stroke="#c00000"/>
</svg>
</body></html>
